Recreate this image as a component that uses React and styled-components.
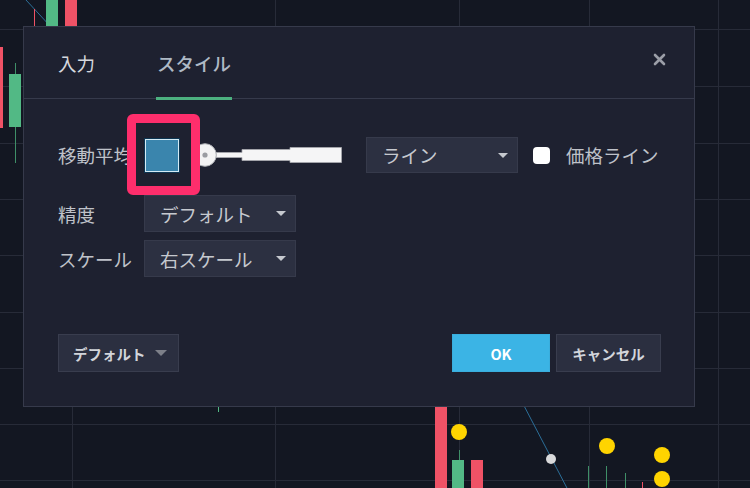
import React from 'react';
import styled, { createGlobalStyle } from 'styled-components';

const GlobalStyle = createGlobalStyle`
  html, body { margin: 0; padding: 0; background: #131722; }
  body { font-family: "Noto Sans CJK JP", "Noto Sans", sans-serif; }
  * { box-sizing: border-box; }
`;

const Page = styled.div`
  position: relative;
  width: 750px;
  height: 488px;
  overflow: hidden;
  background: #131722;
  padding: 26px 0 0 23px;
`;

const ChartLayer = styled.svg`
  position: absolute;
  left: 0;
  top: 0;
`;

const Dialog = styled.div`
  position: relative;
  width: 672px;
  height: 381px;
  background: #1e2130;
  border: 1px solid #363a4b;
  display: flex;
  flex-direction: column;
`;

const Header = styled.div`
  height: 72px;
  border-bottom: 1px solid #363a4b;
  display: flex;
  align-items: stretch;
  padding: 0 28px 0 33px;
`;

const Tabs = styled.div`
  display: flex;
  gap: 60px;
`;

const Tab = styled.div`
  position: relative;
  display: flex;
  align-items: center;
  padding: 0 1px;
  font-size: 18.5px;
  font-weight: ${p => (p.$active ? 500 : 400)};
  color: ${p => (p.$active ? '#aeb9c5' : '#d5d7dd')};
  &::after {
    content: '';
    display: ${p => (p.$active ? 'block' : 'none')};
    position: absolute;
    left: 0;
    right: 0;
    bottom: -2px;
    height: 3px;
    background: #4cb07f;
  }
`;

const Close = styled.div`
  margin-left: auto;
  margin-top: 26px;
  width: 13px;
  height: 13px;
  display: flex;
`;

const Body = styled.div`
  padding: 38px 34px 0 34px;
  display: flex;
  flex-direction: column;
`;

const Row = styled.div`
  display: flex;
  align-items: center;
  height: ${p => p.$h}px;
  margin-top: ${p => p.$mt || 0}px;
`;

const Label = styled.div`
  width: 86px;
  flex: none;
  font-size: 18.5px;
  color: #bfc2c9;
  white-space: nowrap;
`;

const SwatchWrap = styled.div`
  position: relative;
  width: 36px;
  height: 36px;
  flex: none;
`;

const Swatch = styled.div`
  width: 36px;
  height: 35px;
  margin-top: 0.5px;
  background: #3a85ad;
  border: 1px solid #0e3652;
  box-shadow: inset 0 0 0 1px #d4ebf5;
`;

const Highlight = styled.div`
  position: absolute;
  left: -17px;
  top: -23px;
  width: 73px;
  height: 81px;
  border: 9px solid #fe2e6c;
  border-radius: 6px;
`;

const Slider = styled.svg`
  flex: none;
  margin-left: 13px;
  display: block;
`;

const Select = styled.div`
  width: ${p => p.$w}px;
  height: 100%;
  flex: none;
  margin-left: ${p => p.$ml || 0}px;
  background: #2c3041;
  border: 1px solid #363a4b;
  display: flex;
  align-items: center;
  padding: 0 9px 0 15px;
  font-size: 18.5px;
  color: #c6c9cf;
  white-space: nowrap;
`;

const Arrow = styled.span`
  margin-left: auto;
  width: 0;
  height: 0;
  border-left: ${p => p.$s}px solid transparent;
  border-right: ${p => p.$s}px solid transparent;
  border-top: ${p => p.$s}px solid ${p => p.$c};
`;

const Checkbox = styled.span`
  width: 17px;
  height: 17px;
  margin-left: 15px;
  border-radius: 4px;
  background: #ffffff;
  flex: none;
`;

const CheckLabel = styled.span`
  margin-left: 16px;
  font-size: 18.5px;
  color: #bfc2c9;
  white-space: nowrap;
`;

const Footer = styled.div`
  margin-top: auto;
  padding: 0 33px 34px 34px;
  display: flex;
  align-items: center;
  gap: 6px;
`;

const Button = styled.div`
  height: 38px;
  width: ${p => p.$w}px;
  display: flex;
  align-items: center;
  justify-content: ${p => (p.$left ? 'flex-start' : 'center')};
  padding: ${p => (p.$left ? '0 11px 0 14px' : '0')};
  font-size: 14.5px;
  font-weight: 700;
  background: ${p => (p.$primary ? '#3bb4e5' : '#2b2f40')};
  border: 1px solid ${p => (p.$primary ? '#3aaedd' : '#393d4e')};
  color: ${p => (p.$primary ? '#ffffff' : '#d2d5db')};
  white-space: nowrap;
`;

const Spacer = styled.div`
  flex: 1;
`;

function Chart() {
  const vx = [72, 275, 459, 589, 718];
  const hy = [29, 86, 143, 199, 255, 312, 368, 424, 480];
  const green = '#52b985';
  const red = '#ef5266';
  const yellow = '#ffd400';
  return (
    <ChartLayer width="750" height="488" viewBox="0 0 750 488">
      {vx.map(x => (
        <line key={'v' + x} x1={x + 0.5} y1="0" x2={x + 0.5} y2="488" stroke="#272b38" strokeWidth="1" />
      ))}
      {hy.map(y => (
        <line key={'h' + y} x1="0" y1={y + 0.5} x2="750" y2={y + 0.5} stroke="#272b38" strokeWidth="1" />
      ))}
      <line x1="26" y1="0" x2="51" y2="27" stroke="#2c6f99" strokeWidth="1" />
      <line x1="34.5" y1="9" x2="34.5" y2="27" stroke={red} strokeWidth="1" />
      <rect x="46" y="0" width="12" height="27" fill={green} />
      <rect x="65" y="0" width="12" height="27" fill={red} />
      <rect x="0" y="47" width="3" height="81" fill={red} />
      <line x1="15.5" y1="63" x2="15.5" y2="163" stroke="#3f8f68" strokeWidth="1" />
      <rect x="9" y="74" width="12" height="53" fill={green} />
      <line x1="218.5" y1="406" x2="218.5" y2="412" stroke={green} strokeWidth="1" />
      <rect x="435" y="400" width="12" height="88" fill={red} />
      <line x1="459.5" y1="450" x2="459.5" y2="462" stroke="#3f8f68" strokeWidth="1" />
      <circle cx="459" cy="432" r="8" fill={yellow} />
      <rect x="452" y="460" width="12" height="28" fill={green} />
      <rect x="471" y="460" width="12" height="28" fill={red} />
      <line x1="521" y1="400" x2="568" y2="490" stroke="#2c6f99" strokeWidth="1" />
      <circle cx="551" cy="459" r="5" fill="#d9d9db" />
      <line x1="588.5" y1="466" x2="588.5" y2="488" stroke="#3f8f68" strokeWidth="1" />
      <line x1="606.5" y1="466" x2="606.5" y2="488" stroke="#3f8f68" strokeWidth="1" />
      <line x1="625.5" y1="473" x2="625.5" y2="488" stroke="#3f8f68" strokeWidth="1" />
      <line x1="642.5" y1="482" x2="642.5" y2="488" stroke={red} strokeWidth="1" />
      <circle cx="607" cy="446" r="8" fill={yellow} />
      <circle cx="662" cy="455" r="8" fill={yellow} />
      <circle cx="662" cy="479" r="8" fill={yellow} />
    </ChartLayer>
  );
}

function WidthSlider() {
  return (
    <Slider width="149" height="24" viewBox="0 0 149 24">
      <polygon
        points="23,9.5 49,9.5 49,6.5 97,6.5 97,4.5 148.5,4.5 148.5,19.5 97,19.5 97,17.5 49,17.5 49,14.5 23,14.5"
        fill="#f5f5f6"
        stroke="#a9abb0"
        strokeWidth="0.8"
      />
      <circle cx="12" cy="12" r="11.3" fill="#f3f3f4" stroke="#aeb0b5" strokeWidth="1" />
      <circle cx="12" cy="12" r="2.6" fill="#9a9ca2" />
    </Slider>
  );
}

export default function App() {
  return (
    <>
      <GlobalStyle />
      <Page>
        <Chart />
        <Dialog>
          <Header>
            <Tabs>
              <Tab>入力</Tab>
              <Tab $active>スタイル</Tab>
            </Tabs>
            <Close>
              <svg width="13" height="13" viewBox="0 0 13 13">
                <path d="M2 2 L11 11 M11 2 L2 11" stroke="#9b9ea7" strokeWidth="2.6" strokeLinecap="round" />
              </svg>
            </Close>
          </Header>
          <Body>
            <Row $h={36}>
              <Label>移動平均</Label>
              <SwatchWrap>
                <Swatch />
                <Highlight />
              </SwatchWrap>
              <WidthSlider />
              <Select $w={152} $ml={24}>
                ライン
                <Arrow $s={5} $c="#c6c9cf" />
              </Select>
              <Checkbox />
              <CheckLabel>価格ライン</CheckLabel>
            </Row>
            <Row $h={37} $mt={22}>
              <Label>精度</Label>
              <Select $w={152}>
                デフォルト
                <Arrow $s={5} $c="#c6c9cf" />
              </Select>
            </Row>
            <Row $h={37} $mt={8}>
              <Label>スケール</Label>
              <Select $w={152}>
                右スケール
                <Arrow $s={5} $c="#c6c9cf" />
              </Select>
            </Row>
          </Body>
          <Footer>
            <Button $w={121} $left>
              デフォルト
              <Arrow $s={6} $c="#7d8089" />
            </Button>
            <Spacer />
            <Button $w={98} $primary>OK</Button>
            <Button $w={105}>キャンセル</Button>
          </Footer>
        </Dialog>
      </Page>
    </>
  );
}
